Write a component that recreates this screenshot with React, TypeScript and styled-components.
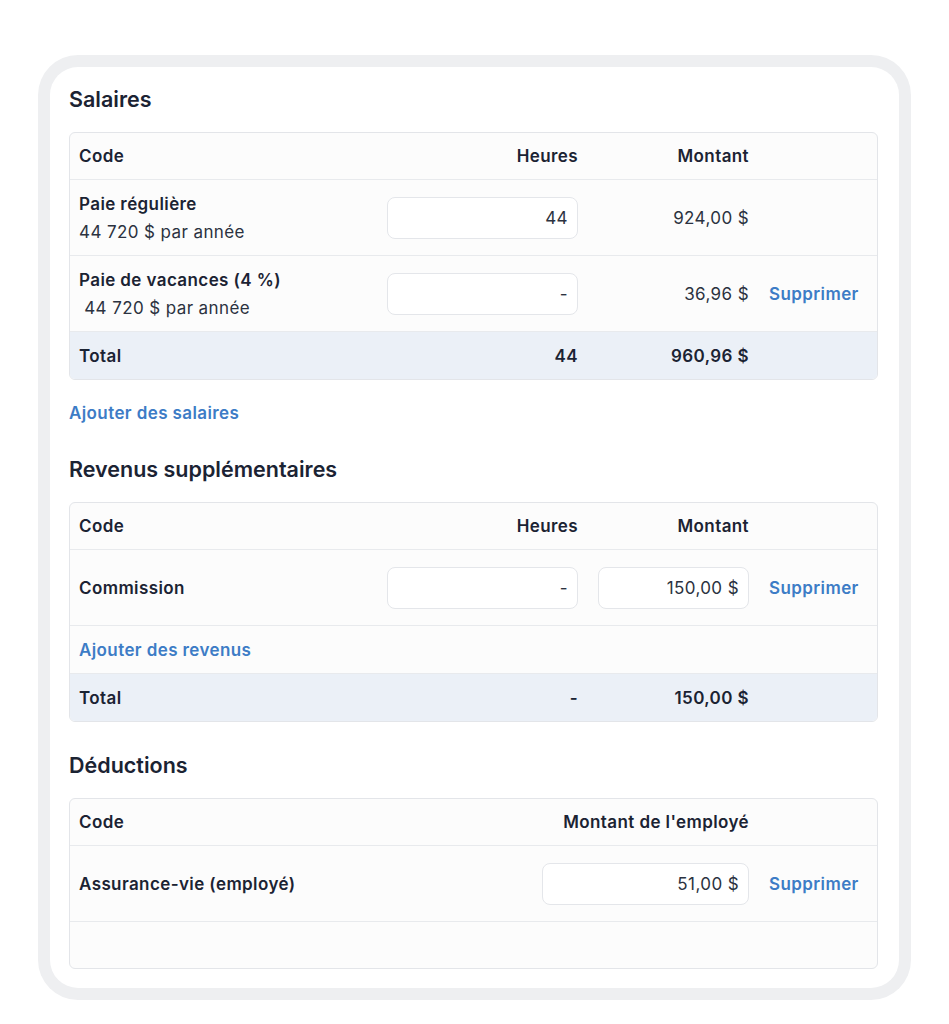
import * as React from 'react';
import styled, { createGlobalStyle } from 'styled-components';

const WAGE_COLS = '1fr 211px 171px 118px';
const DEDUCTION_COLS = '1fr 227px 118px';

type RowKind = 'header' | 'item' | 'link' | 'total' | 'empty';

const ROW_HEIGHT: Record<RowKind, number> = {
  header: 46,
  item: 75,
  link: 47,
  total: 47,
  empty: 46,
};

const App: React.FC = () => {
  return (
    <>
      <GlobalStyle />
      <S.Frame>
        <S.Card>
          <S.Section>
            <S.Heading>Salaires</S.Heading>
            <S.Table>
              <S.Row $cols={WAGE_COLS} $kind="header">
                <S.Cell $bold>Code</S.Cell>
                <S.Cell $bold $right>Heures</S.Cell>
                <S.Cell $bold $right>Montant</S.Cell>
                <S.Cell />
              </S.Row>
              <S.Row $cols={WAGE_COLS} $kind="item">
                <S.Cell>
                  <S.CodeBlock>
                    <S.CodeTitle>Paie régulière</S.CodeTitle>
                    <S.CodeSub>44 720 $ par année</S.CodeSub>
                  </S.CodeBlock>
                </S.Cell>
                <S.Cell>
                  <S.Input>44</S.Input>
                </S.Cell>
                <S.Cell $right>924,00 $</S.Cell>
                <S.Cell />
              </S.Row>
              <S.Row $cols={WAGE_COLS} $kind="item">
                <S.Cell>
                  <S.CodeBlock>
                    <S.CodeTitle>Paie de vacances (4 %)</S.CodeTitle>
                    <S.CodeSub>{'\u00a044 720 $ par année'}</S.CodeSub>
                  </S.CodeBlock>
                </S.Cell>
                <S.Cell>
                  <S.Input>-</S.Input>
                </S.Cell>
                <S.Cell $right>36,96 $</S.Cell>
                <S.Cell>
                  <S.Link>Supprimer</S.Link>
                </S.Cell>
              </S.Row>
              <S.Row $cols={WAGE_COLS} $kind="total">
                <S.Cell $bold>Total</S.Cell>
                <S.Cell $bold $right>44</S.Cell>
                <S.Cell $bold $right>960,96 $</S.Cell>
                <S.Cell />
              </S.Row>
            </S.Table>
            <S.AddLink>Ajouter des salaires</S.AddLink>
          </S.Section>

          <S.Section>
            <S.Heading>Revenus supplémentaires</S.Heading>
            <S.Table>
              <S.Row $cols={WAGE_COLS} $kind="header">
                <S.Cell $bold>Code</S.Cell>
                <S.Cell $bold $right>Heures</S.Cell>
                <S.Cell $bold $right>Montant</S.Cell>
                <S.Cell />
              </S.Row>
              <S.Row $cols={WAGE_COLS} $kind="item">
                <S.Cell $bold>Commission</S.Cell>
                <S.Cell>
                  <S.Input>-</S.Input>
                </S.Cell>
                <S.Cell>
                  <S.Input>150,00 $</S.Input>
                </S.Cell>
                <S.Cell>
                  <S.Link>Supprimer</S.Link>
                </S.Cell>
              </S.Row>
              <S.Row $cols={WAGE_COLS} $kind="link">
                <S.Cell>
                  <S.Link>Ajouter des revenus</S.Link>
                </S.Cell>
              </S.Row>
              <S.Row $cols={WAGE_COLS} $kind="total">
                <S.Cell $bold>Total</S.Cell>
                <S.Cell $bold $right>-</S.Cell>
                <S.Cell $bold $right>150,00 $</S.Cell>
                <S.Cell />
              </S.Row>
            </S.Table>
          </S.Section>

          <S.Section>
            <S.Heading>Déductions</S.Heading>
            <S.Table>
              <S.Row $cols={DEDUCTION_COLS} $kind="header">
                <S.Cell $bold>Code</S.Cell>
                <S.Cell $bold $right>Montant de l'employé</S.Cell>
                <S.Cell />
              </S.Row>
              <S.Row $cols={DEDUCTION_COLS} $kind="item">
                <S.Cell $bold>Assurance-vie (employé)</S.Cell>
                <S.Cell>
                  <S.Input>51,00 $</S.Input>
                </S.Cell>
                <S.Cell>
                  <S.Link>Supprimer</S.Link>
                </S.Cell>
              </S.Row>
              <S.Row $cols={DEDUCTION_COLS} $kind="empty" />
            </S.Table>
          </S.Section>
        </S.Card>
      </S.Frame>
    </>
  );
};

const GlobalStyle = createGlobalStyle`
  html, body {
    margin: 0;
    padding: 0;
    background: #ffffff;
  }
  body {
    font-family: Inter, "Noto Sans", "Liberation Sans", sans-serif;
    font-size: 17px;
    letter-spacing: 0.4px;
    color: #2b3240;
    -webkit-font-smoothing: antialiased;
  }
`;

const S = {
  Frame: styled.div`
    margin: 55px 38px 25px 38px;
    padding: 12px;
    background: #eeeff1;
    border-radius: 40px;
  `,
  Card: styled.div`
    background: #ffffff;
    border-radius: 28px;
    padding: 20px 21px 19px 19px;
    display: flex;
    flex-direction: column;
    gap: 31px;
  `,
  Section: styled.section`
    display: flex;
    flex-direction: column;
    gap: 21px;
  `,
  Heading: styled.h2`
    margin: 0;
    font-size: 21.5px;
    letter-spacing: 0;
    line-height: 24px;
    font-weight: 600;
    color: #1b2333;
  `,
  Table: styled.div`
    border: 1px solid #e3e5e9;
    border-radius: 6px;
    background: #fcfcfc;
    overflow: hidden;
  `,
  Row: styled.div<{ $cols: string; $kind: RowKind }>`
    display: grid;
    grid-template-columns: ${p => p.$cols};
    height: ${p => ROW_HEIGHT[p.$kind]}px;
    background: ${p => (p.$kind === 'total' ? '#ebf0f7' : 'transparent')};
    &:not(:last-child) {
      border-bottom: 1px solid #e8eaed;
    }
  `,
  Cell: styled.div<{ $bold?: boolean; $right?: boolean }>`
    display: flex;
    align-items: center;
    justify-content: ${p => (p.$right ? 'flex-end' : 'flex-start')};
    padding: 0 10px;
    font-weight: ${p => (p.$bold ? 600 : 400)};
    color: ${p => (p.$bold ? '#1b2333' : '#2b3240')};
    white-space: nowrap;
    &:first-child {
      padding-left: 9px;
    }
  `,
  CodeBlock: styled.div`
    display: flex;
    flex-direction: column;
    line-height: 28px;
  `,
  CodeTitle: styled.span`
    font-weight: 600;
    color: #1b2333;
  `,
  CodeSub: styled.span`
    font-weight: 400;
    color: #2b3240;
    white-space: pre;
  `,
  Input: styled.div`
    flex: 1;
    height: 42px;
    box-sizing: border-box;
    display: flex;
    align-items: center;
    justify-content: flex-end;
    padding: 0 9px;
    border: 1px solid #e4e6ea;
    border-radius: 8px;
    background: #ffffff;
    color: #2b3240;
  `,
  Link: styled.a`
    line-height: 24px;
    font-weight: 600;
    color: #3d7cc6;
    cursor: pointer;
  `,
  AddLink: styled.a`
    align-self: flex-start;
    margin-bottom: 1px;
    line-height: 24px;
    font-weight: 600;
    color: #3d7cc6;
    cursor: pointer;
  `,
};

export default App;
